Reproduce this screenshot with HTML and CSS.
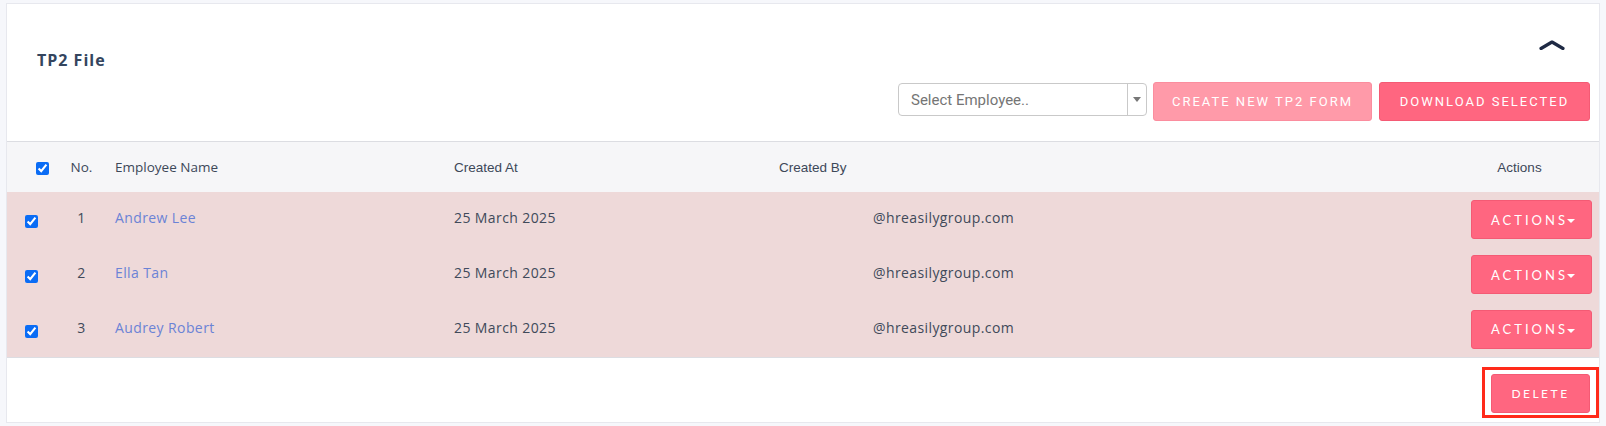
FILE: index.html
```html
<!DOCTYPE html>
<html>
<head>
<meta charset="utf-8">
<link rel="stylesheet" href="styles.css">
</head>
<body>
<div class="card">
  <div class="card-head">
    <div class="head-top">
      <h2 class="title">TP2 File</h2>
      <span class="collapse">
        <svg width="26" height="10" viewBox="0 0 26 10"><path d="M2 8.5 L13 2 L24 8.5" fill="none" stroke="#1f2a44" stroke-width="3.2" stroke-linecap="round" stroke-linejoin="round"/></svg>
      </span>
    </div>
    <div class="toolbar">
      <div class="select">
        <span class="select-text">Select Employee..</span>
        <span class="select-arrow"><span class="tri"></span></span>
      </div>
      <button class="btn btn-light create">CREATE NEW TP2 FORM</button>
      <button class="btn download">DOWNLOAD SELECTED</button>
    </div>
  </div>
  <table class="grid">
    <thead>
      <tr>
        <th class="c-check head-check"><input type="checkbox" checked></th>
        <th class="c-no geo">No.</th>
        <th class="c-name geo">Employee Name</th>
        <th class="c-date">Created At</th>
        <th class="c-by">Created By</th>
        <th class="c-act">Actions</th>
      </tr>
    </thead>
    <tbody>
      <tr>
        <td class="c-check"><input type="checkbox" checked></td>
        <td class="c-no">1</td>
        <td class="c-name"><a class="link">Andrew Lee</a></td>
        <td class="c-date">25 March 2025</td>
        <td class="c-by"><span class="email">@hreasilygroup.com</span></td>
        <td class="c-act"><button class="btn act">ACTIONS<span class="caret"></span></button></td>
      </tr>
      <tr>
        <td class="c-check"><input type="checkbox" checked></td>
        <td class="c-no">2</td>
        <td class="c-name"><a class="link">Ella Tan</a></td>
        <td class="c-date">25 March 2025</td>
        <td class="c-by"><span class="email">@hreasilygroup.com</span></td>
        <td class="c-act"><button class="btn act">ACTIONS<span class="caret"></span></button></td>
      </tr>
      <tr>
        <td class="c-check"><input type="checkbox" checked></td>
        <td class="c-no">3</td>
        <td class="c-name"><a class="link">Audrey Robert</a></td>
        <td class="c-date">25 March 2025</td>
        <td class="c-by"><span class="email">@hreasilygroup.com</span></td>
        <td class="c-act"><button class="btn act">ACTIONS<span class="caret"></span></button></td>
      </tr>
    </tbody>
  </table>
  <div class="card-foot">
    <div class="highlight">
      <button class="btn delete">DELETE</button>
    </div>
  </div>
</div>
</body>
</html>
```
FILE: styles.css
```css
* { box-sizing: border-box; }
html, body { margin: 0; padding: 0; }
body {
  background: #f6f7fb;
  font-family: "Open Sans", "Liberation Sans", sans-serif;
  color: #3d4858;
  height: 426px;
  overflow: hidden;
}
.card {
  margin: 3px 6px 0 6px;
  width: 1594px;
  height: 420px;
  background: #fff;
  border: 1px solid #e7e8ee;
}
.card-head {
  border-bottom: 1px solid #dcdde2;
  padding: 0 9px 20px 30px;
}
.head-top {
  display: flex;
  justify-content: space-between;
  align-items: flex-start;
  height: 78px;
}
.title {
  margin: 46px 0 0 0;
  font-family: "Open Sans", sans-serif;
  font-weight: 700;
  font-size: 16px;
  line-height: 20px;
  letter-spacing: 1px;
  color: #34455e;
}
.collapse {
  display: block;
  width: 26px;
  height: 10px;
  margin: 36px 25px 0 0;
}
.collapse svg { display: block; }
.toolbar {
  display: flex;
  justify-content: flex-end;
  align-items: flex-start;
  gap: 6px;
}
.select {
  margin-top: 1px;
  width: 249px;
  height: 33px;
  border: 1px solid #c9c9c9;
  border-radius: 4px;
  display: flex;
  align-items: stretch;
  background: #fff;
}
.select-text {
  flex: 1;
  padding-left: 12px;
  display: flex;
  align-items: center;
  font-family: Roboto, sans-serif;
  font-size: 15px;
  color: #757575;
}
.select-arrow {
  width: 19px;
  border-left: 1px solid #c9c9c9;
  display: flex;
  align-items: center;
  justify-content: center;
}
.tri {
  width: 0; height: 0;
  border-left: 4px solid transparent;
  border-right: 4px solid transparent;
  border-top: 5px solid #777;
}
.btn {
  font-family: Roboto, sans-serif;
  font-size: 13px;
  letter-spacing: 2px;
  color: #fff;
  background: #ff6680;
  border: 1px solid #f45a74;
  border-radius: 3px;
  height: 39px;
  padding: 0;
  cursor: pointer;
}
.btn-light {
  background: #ff9aa9;
  border-color: #fb8d9e;
}
.create { width: 219px; }
.download { width: 211px; margin-left: 1px; }
.grid {
  width: 100%;
  border-collapse: collapse;
  table-layout: fixed;
}
.grid th {
  background: #f6f6f8;
  height: 50px;
  font-family: "Liberation Sans", Arial, sans-serif;
  font-weight: 400;
  font-size: 13.5px;
  color: #3d4858;
  text-align: left;
  padding: 0 0 0 12px;
}
.grid th.geo {
  font-family: "Open Sans", sans-serif;
  font-size: 13.5px;
}
.grid td {
  background: #eed9d9;
  height: 55px;
  font-size: 14px;
  color: #404a5a;
  padding: 0 0 4px 12px;
  letter-spacing: 0.4px;
}
.grid tbody tr:last-child td { border-bottom: 1px solid #dcdde2; }
.grid input[type=checkbox] {
  margin: 0;
  width: 13px;
  height: 13px;
  accent-color: #0a6cf5;
  vertical-align: middle;
}
.c-check { width: 53px; }
.grid td.c-check { padding: 1px 0 0 18px; }
.grid th.head-check { padding-left: 29px; padding-top: 2px; }
.c-no { width: 43px; }
.grid th.c-no, .grid td.c-no { text-align: center; padding-left: 0; }
.c-name { width: 339px; }
.c-date { width: 325px; }
.c-by { width: 673px; }
.c-act { width: 159px; }
.grid th.c-act { text-align: center; padding-left: 0; }
.grid td.c-act { padding: 0 7px 0 0; text-align: right; }
.email { padding-left: 94px; }
.link { color: #6b83d6; text-decoration: none; }
.act {
  width: 121px;
  font-family: Lato, sans-serif;
  font-size: 13px;
  letter-spacing: 3px;
  padding-left: 3px;
}
.caret {
  display: inline-block;
  width: 0; height: 0;
  border-left: 4px solid transparent;
  border-right: 4px solid transparent;
  border-top: 4px solid #fff;
  vertical-align: middle;
  margin-left: -1px;
}
.card-foot {
  display: flex;
  justify-content: flex-end;
  padding-top: 9px;
}
.highlight {
  border: 3px solid #ff2a1a;
  padding: 4px 6px 2px 6px;
}
.delete {
  width: 99px;
  font-family: Lato, sans-serif;
  font-size: 12px;
  letter-spacing: 2.5px;
}
```
